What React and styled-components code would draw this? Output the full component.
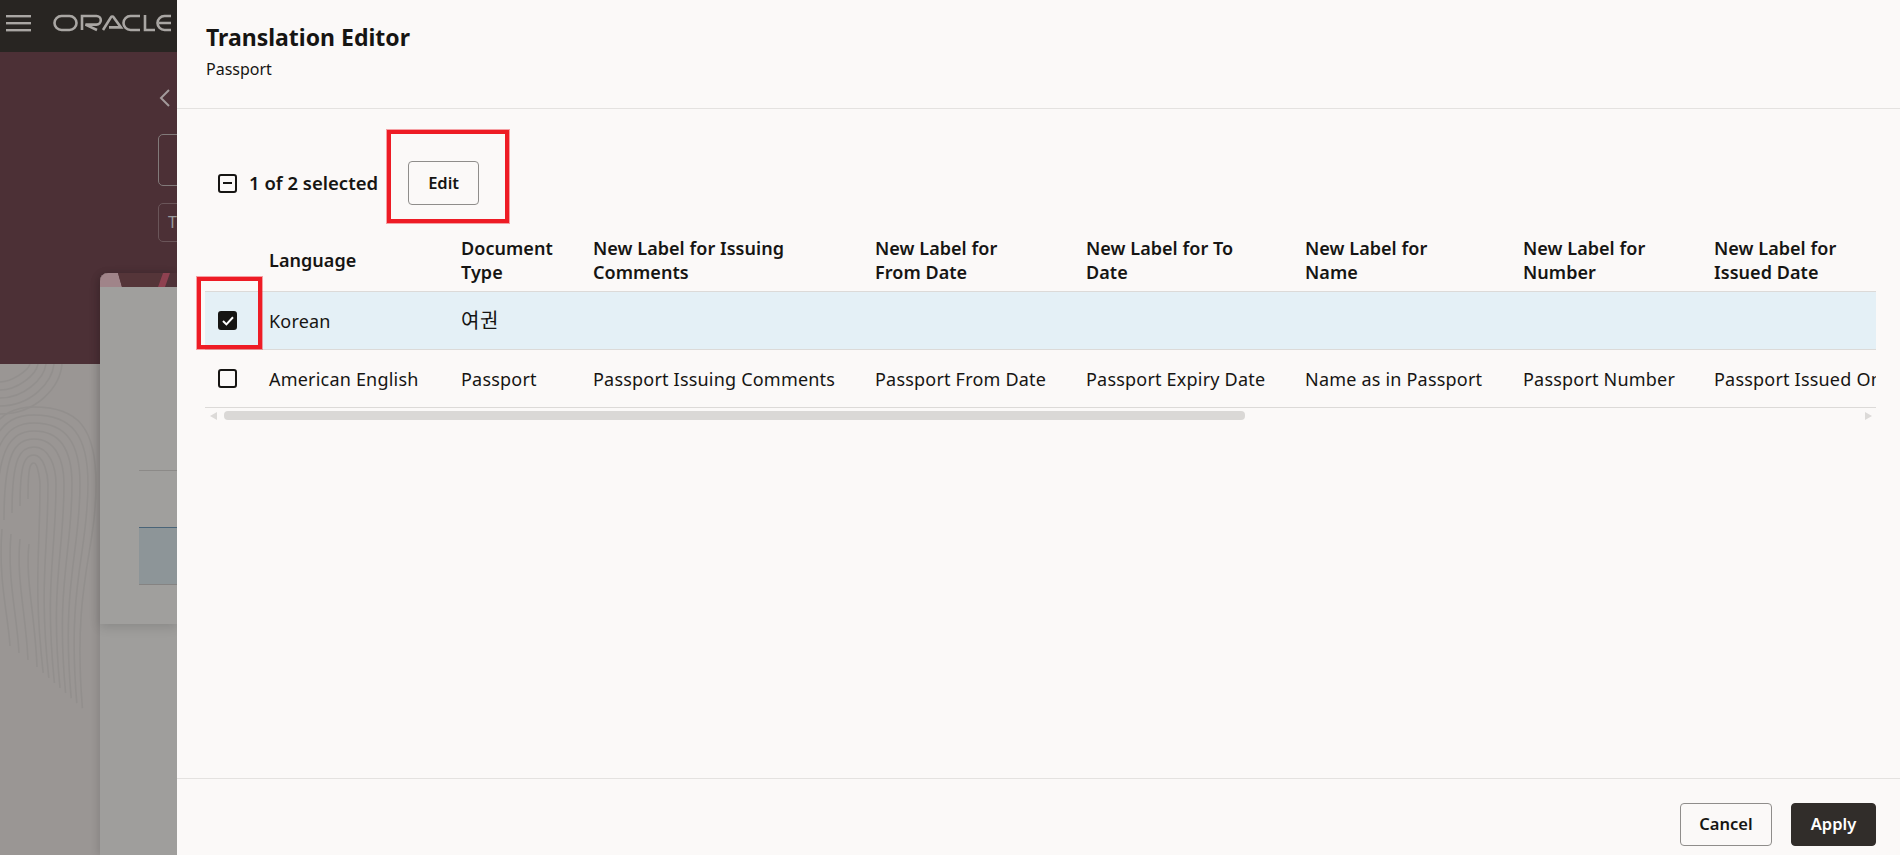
import React from 'react';
import styled, { createGlobalStyle } from 'styled-components';

const GlobalStyle = createGlobalStyle`
  html, body {
    margin: 0;
    height: 100%;
    overflow: hidden;
    font-family: "Noto Sans", "Noto Sans CJK KR", sans-serif;
    color: #161513;
  }
`;

const colors = {
  panel: '#fbf9f8',
  line: '#e4e2e0',
  rowLine: '#dcdad8',
  selected: '#e4f0f6',
  red: '#ee1c25',
};

const Page = styled.div`
  width: 1900px;
  height: 855px;
  position: relative;
  overflow: hidden;
  background: #9a9694;
`;

const AppBar = styled.header`
  box-sizing: border-box;
  height: 52px;
  background: #282522;
  display: flex;
  align-items: center;
  padding: 0 0 7px 6px;
  gap: 21px;
`;

const Hero = styled.div`
  box-sizing: border-box;
  height: 312px;
  background: #4c3036;
  padding: 36px 0 0 158px;
`;

const BackChevron = styled.svg`
  display: block;
  width: 14px;
  height: 20px;
  margin: 0 0 26px 0;
`;

const GhostInput = styled.div`
  box-sizing: border-box;
  width: 60px;
  height: ${props => props.tall ? '52px' : '39px'};
  margin-bottom: 17px;
  border: 1px solid ${props => props.tall ? '#827a7a' : '#6a5559'};
  border-radius: 5px;
  color: #9a9c9e;
  font-size: 16px;
  line-height: 36px;
  padding-left: 9px;
`;

const Fingerprint = styled.svg`
  position: absolute;
  left: 0;
  top: 364px;
  width: 100px;
  height: 370px;
`;

const CardColumn = styled.div`
  position: absolute;
  left: 100px;
  top: 273px;
  bottom: 0;
  width: 77px;
  background: #9f9e9c;
  box-shadow: -3px 0 7px rgba(0, 0, 0, 0.1);
  border-radius: 8px 0 0 0;
`;

const Card = styled.section`
  height: 351px;
  background: #a09f9d;
  border-radius: 8px 0 0 0;
  box-shadow: 0 3px 12px rgba(0, 0, 0, 0.14);
  overflow: hidden;
`;

const CardBanner = styled.svg`
  display: block;
  width: 77px;
  height: 14px;
`;

const CardBody = styled.div`
  padding: 183px 0 0 39px;
`;

const CardRule = styled.div`
  height: 1px;
  background: #8c8a88;
  margin-bottom: 56px;
`;

const CardRow = styled.div`
  box-sizing: border-box;
  height: 58px;
  background: #8d9598;
  border-top: 1px solid #4a6478;
  border-bottom: 1px solid #858382;
`;

const Drawer = styled.aside`
  position: absolute;
  left: 177px;
  top: 0;
  right: 0;
  bottom: 0;
  background: ${colors.panel};
  display: flex;
  flex-direction: column;
`;

const DrawerHeader = styled.div`
  box-sizing: border-box;
  height: 109px;
  flex: none;
  padding: 22px 29px 0;
  border-bottom: 1px solid ${colors.line};
`;

const Title = styled.h1`
  margin: 0;
  font-size: 23px;
  line-height: 31px;
  font-weight: 700;
`;

const Subtitle = styled.div`
  margin-top: 5px;
  font-size: 16px;
  line-height: 22px;
`;

const DrawerBody = styled.div`
  flex: 1;
  padding: 0 24px 0 28px;
`;

const Toolbar = styled.div`
  height: 114px;
  display: flex;
  align-items: center;
  padding-left: 13px;
  padding-top: 34px;
  box-sizing: border-box;
`;

const SelectedCount = styled.span`
  margin-left: 12px;
  padding-bottom: 2px;
  font-size: 18.5px;
  font-weight: 600;
  white-space: nowrap;
`;

const Outlined = styled.button`
  box-sizing: border-box;
  font-family: inherit;
  font-size: 16.5px;
  font-weight: 600;
  color: #161513;
  background: transparent;
  border: 1px solid #8f8d8b;
  border-radius: 4px;
  padding: 0 0 2px;
  display: block;
`;

const EditButton = styled(Outlined)`
  width: 71px;
  height: 44px;
  margin-left: 30px;
`;

const Highlight = styled.div`
  position: absolute;
  box-sizing: border-box;
  border: 4px solid ${colors.red};
  box-shadow: 0 0 0 1px rgba(238, 28, 37, 0.4);
  pointer-events: none;
`;

const EditHighlight = styled(Highlight)`
  left: 210px;
  top: 130px;
  width: 122px;
  height: 93px;
`;

const CheckHighlight = styled(Highlight)`
  left: 20px;
  top: 277px;
  width: 65px;
  height: 72px;
`;

const Grid = styled.div`
  width: 1671px;
  overflow: hidden;
`;

const Row = styled.div`
  display: grid;
  grid-template-columns: 64px 192px 132px 282px 211px 219px 218px 191px 191px;
  align-items: center;
  height: ${props => props.head ? '69px' : '58px'};
  box-sizing: border-box;
  background: ${props => props.selected ? colors.selected : 'transparent'};
  border-bottom: 1px solid ${colors.rowLine};
  width: 1700px;
`;

const HeadCell = styled.div`
  font-size: 18px;
  letter-spacing: 0.05px;
  line-height: 24px;
  font-weight: 600;
  white-space: pre-line;
  padding-top: 6px;
`;

const Cell = styled.div`
  font-size: ${props => props.large ? '20px' : '18px'};
  letter-spacing: ${props => props.large ? '0.5px' : '0.2px'};
  line-height: 24px;
  white-space: nowrap;
`;

const CheckCell = styled.div`
  padding-left: 13px;
`;

const Box = styled.div`
  box-sizing: border-box;
  width: 19px;
  height: 19px;
  border: 2px solid #161513;
  border-radius: 3px;
  background: ${props => props.checked ? '#161513' : 'transparent'};
  display: flex;
  align-items: center;
  justify-content: center;
  flex: none;
`;

const Scrollbar = styled.div`
  width: 1671px;
  height: 9px;
  margin-top: 3px;
  display: flex;
  align-items: center;
  gap: 7px;
  padding: 0 4px 0 5px;
  box-sizing: border-box;
`;

const Arrow = styled.div`
  width: 0;
  height: 0;
  border-top: 4.5px solid transparent;
  border-bottom: 4.5px solid transparent;
  ${props => props.right
    ? `border-left: 7px solid #dcdad8; margin-left: auto;`
    : `border-right: 7px solid #dcdad8;`}
`;

const Thumb = styled.div`
  width: 1021px;
  height: 9px;
  border-radius: 4px;
  background: #dad8d6;
`;

const DrawerFooter = styled.div`
  box-sizing: border-box;
  height: 77px;
  flex: none;
  border-top: 1px solid ${colors.line};
  display: flex;
  justify-content: flex-end;
  gap: 19px;
  padding: 24px 24px 0 0;
`;

const CancelButton = styled(Outlined)`
  width: 92px;
  height: 43px;
`;

const ApplyButton = styled(Outlined)`
  width: 85px;
  height: 43px;
  background: #312d2a;
  border-color: #312d2a;
  color: #fff;
`;

const columns = [
  '',
  'Language',
  'Document\nType',
  'New Label for Issuing\nComments',
  'New Label for\nFrom Date',
  'New Label for To\nDate',
  'New Label for\nName',
  'New Label for\nNumber',
  'New Label for\nIssued Date',
];

const rows = [
  { language: 'Korean', selected: true, values: ['여권', '', '', '', '', '', ''] },
  {
    language: 'American English',
    selected: false,
    values: [
      'Passport',
      'Passport Issuing Comments',
      'Passport From Date',
      'Passport Expiry Date',
      'Name as in Passport',
      'Passport Number',
      'Passport Issued On',
    ],
  },
];

// contour lines of the map texture behind the page
const whorl = [0, 1, 2, 3, 4, 5, 6, 7].map(i => {
  const cx = 34;
  const rx = 6 + i * 8;
  const top = 99 - i * 8;
  const endx = cx + rx * 0.7 + 5;
  const endy = 270 + endx * 0.9;
  return `M${cx - rx} ${135 + i * 7}C${cx - rx} ${top + rx * 0.4} ${cx - rx * 0.6} ${top} ${cx} ${top}`
    + `C${cx + rx * 0.7} ${top} ${cx + rx} ${top + 20} ${cx + rx} 120`
    + `C${cx + rx} 190 ${endx - 10} 220 ${endx} ${endy}`;
});

const leftTails = [0, 1, 2, 3].map(j => {
  const x = 2 + j * 9;
  return `M${x} ${165 + j * 5}C${x - 4} 215 ${x + 6} 250 ${x + 8} ${282 + j * 7}`;
});

const upperArcs = [0, 1, 2, 3, 4].map(k => {
  const r = 14 + k * 8;
  return `M0 ${r + 4}C${r * 0.8} ${r + 4} ${r + 14} ${r * 0.5} ${r + 16} 0`;
});

const Hamburger = () => (
  <svg width="26" height="18" viewBox="0 0 26 18">
    <rect x="0" y="1" width="25" height="2.4" fill="#a9a6a3" />
    <rect x="0" y="8" width="25" height="2.4" fill="#a9a6a3" />
    <rect x="0" y="15" width="25" height="2.4" fill="#a9a6a3" />
  </svg>
);

const OracleLogo = () => (
  <svg width="118" height="18" viewBox="0 0 118 18" fill="none" stroke="#a9a6a3" strokeWidth="2.6">
    <rect x="1.5" y="2" width="22" height="14" rx="7" />
    <path d="M29 16V2h14.5a4 4 0 0 1 0 8.6H32.5L44 16" />
    <path d="M50 16 58 3.2a1.5 1.5 0 0 1 2.6 0L68 13.4H56" />
    <path d="M87 2H77.5a7 7 0 0 0 0 14H87" />
    <path d="M92 1v15h10" />
    <path d="M118 2h-6.5a7 7 0 0 0 0 14H118M106 9h12" />
  </svg>
);

const Minus = () => (
  <Box>
    <svg width="9" height="2" viewBox="0 0 9 2"><rect width="9" height="2" fill="#161513" /></svg>
  </Box>
);

const Check = ({ checked }) => (
  <Box checked={checked}>
    {checked && (
      <svg width="12" height="10" viewBox="0 0 12 10" fill="none">
        <path d="M1 5 4.4 8.4 11 1.2" stroke="#fff" strokeWidth="2" />
      </svg>
    )}
  </Box>
);

const Background = () => (
  <>
    <AppBar>
      <Hamburger />
      <OracleLogo />
    </AppBar>
    <Hero>
      <BackChevron viewBox="0 0 14 20" fill="none">
        <path d="M11 2 3 10l8 8" stroke="#a39a9b" strokeWidth="2" />
      </BackChevron>
      <GhostInput tall="true" />
      <GhostInput>T</GhostInput>
    </Hero>
    <Fingerprint viewBox="0 0 100 370" fill="none" stroke="#8e8b89" strokeWidth="1.5" opacity="0.6">
      {[...whorl, ...leftTails, ...upperArcs].map(d => <path key={d} d={d} />)}
    </Fingerprint>
    <CardColumn>
      <Card>
        <CardBanner viewBox="0 0 77 14">
          <rect width="77" height="14" fill="#4f3238" />
          <path d="M0 0h18l4 14H0z" fill="#a08489" />
          <path d="M18 0h45l-5 14H22z" fill="#553539" />
          <path d="M63 0h7l-5 14h-7z" fill="#8f4150" />
        </CardBanner>
        <CardBody>
          <CardRule />
          <CardRow />
        </CardBody>
      </Card>
    </CardColumn>
  </>
);

const App = () => (
  <Page>
    <GlobalStyle />
    <Background />
    <Drawer>
      <DrawerHeader>
        <Title>Translation Editor</Title>
        <Subtitle>Passport</Subtitle>
      </DrawerHeader>
      <DrawerBody>
        <Toolbar>
          <Minus />
          <SelectedCount>1 of 2 selected</SelectedCount>
          <EditButton>Edit</EditButton>
        </Toolbar>
        <Grid>
          <Row head="true">
            {columns.map((col, i) => <HeadCell key={i}>{col}</HeadCell>)}
          </Row>
          {rows.map(row => (
            <Row key={row.language} selected={row.selected}>
              <CheckCell><Check checked={row.selected} /></CheckCell>
              <Cell>{row.language}</Cell>
              {row.values.map((val, i) => <Cell key={i} large={val === '여권'}>{val}</Cell>)}
            </Row>
          ))}
        </Grid>
        <Scrollbar>
          <Arrow />
          <Thumb />
          <Arrow right="true" />
        </Scrollbar>
      </DrawerBody>
      <DrawerFooter>
        <CancelButton>Cancel</CancelButton>
        <ApplyButton>Apply</ApplyButton>
      </DrawerFooter>
      <EditHighlight />
      <CheckHighlight />
    </Drawer>
  </Page>
);

export default App;
